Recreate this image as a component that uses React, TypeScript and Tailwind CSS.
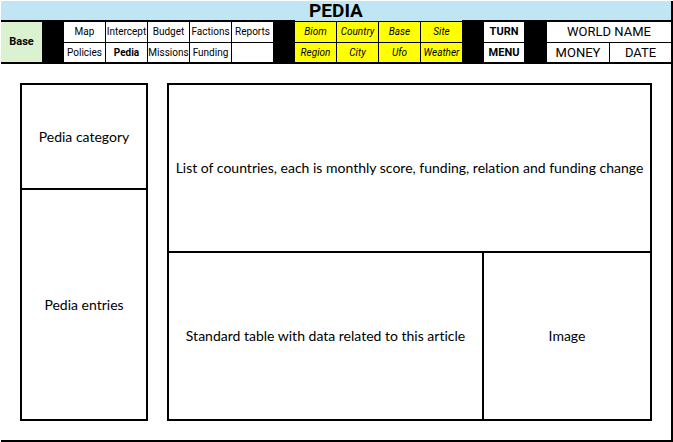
import type { ReactNode } from "react";

const menuItems = [
  "Map", "Intercept", "Budget", "Factions", "Reports",
  "Policies", "Pedia", "Missions", "Funding", "",
];

const placeItems = [
  "Biom", "Country", "Base", "Site",
  "Region", "City", "Ufo", "Weather",
];

function Gap() {
  return <div className="bg-black" />;
}

function Panel({ className = "", children }: { className?: string; children: ReactNode }) {
  return (
    <section className={`flex min-w-0 items-center justify-center bg-white text-center ${className}`}>
      <p className="text-sm">{children}</p>
    </section>
  );
}

export default function App() {
  return (
    <div className="flex min-h-screen flex-col bg-white pt-px pl-px font-['Roboto','Liberation_Sans',sans-serif] text-black">
      <div className="flex flex-1 flex-col border-r-2 border-b-2 border-black">
        <h1 className="flex h-[19px] items-center justify-center bg-[#c0e6f5] text-[19px] leading-5 font-bold">
          PEDIA
        </h1>

        <header className="grid h-11 grid-cols-[41fr_22fr_209fr_22fr_167fr_22fr_40fr_23fr_124fr] grid-rows-1 border-b-2 border-black">
          <button className="min-w-0 border-t-2 border-black bg-[#daf2d0] text-[11px] font-bold">Base</button>
          <Gap />
          <nav
            aria-label="Sections"
            className="grid min-w-0 grid-cols-5 grid-rows-[20fr_19fr] gap-px border-t-2 border-black bg-black"
          >
            {menuItems.map((item, i) =>
              item ? (
                <button
                  key={i}
                  aria-current={item === "Pedia" ? "page" : undefined}
                  className={`min-w-0 bg-white text-[10px] leading-4 ${item === "Pedia" ? "font-bold" : ""}`}
                >
                  {item}
                </button>
              ) : (
                <div key={i} className="bg-white" />
              ),
            )}
          </nav>
          <Gap />
          <div className="flex min-w-0 border-t border-[#c0e6f5]">
            <nav
              aria-label="Places"
              className="grid min-w-0 flex-1 grid-cols-4 grid-rows-[20fr_19fr] gap-px border-t border-black bg-black"
            >
              {placeItems.map((item) => (
                <button key={item} className="min-w-0 bg-[#ffff00] text-[10px] leading-4 italic">
                  {item}
                </button>
              ))}
            </nav>
          </div>
          <Gap />
          <div className="grid min-w-0 grid-rows-[20fr_19fr] gap-px border-t-2 border-black bg-black">
            <button className="min-w-0 bg-white text-[11px] leading-4 font-bold">TURN</button>
            <button className="min-w-0 bg-white text-[11px] leading-4 font-bold">MENU</button>
          </div>
          <Gap />
          <div className="grid min-w-0 grid-cols-[62fr_61fr] grid-rows-[20fr_19fr] gap-px border-t-2 border-black bg-black text-[13px] leading-4">
            <div className="col-span-2 flex items-center justify-center bg-white">WORLD NAME</div>
            <div className="flex items-center justify-center bg-white">MONEY</div>
            <div className="flex items-center justify-center bg-white">DATE</div>
          </div>
        </header>

        <main className="grid flex-1 grid-cols-[128fr_485fr] gap-[19px] p-[19px] font-['Lato','Liberation_Sans',sans-serif] [font-variant-ligatures:none]">
          <div className="grid min-w-0 grid-rows-[103fr_229fr] gap-0.5 border-2 border-black bg-black">
            <Panel>Pedia category</Panel>
            <Panel>Pedia entries</Panel>
          </div>
          <div className="grid min-w-0 grid-cols-[313fr_166fr] grid-rows-2 gap-0.5 border-2 border-black bg-black">
            <Panel className="col-span-2">
              List of countries, each is monthly score, funding, relation and funding change
            </Panel>
            <Panel>Standard table with data related to this article</Panel>
            <Panel>Image</Panel>
          </div>
        </main>
      </div>
    </div>
  );
}
